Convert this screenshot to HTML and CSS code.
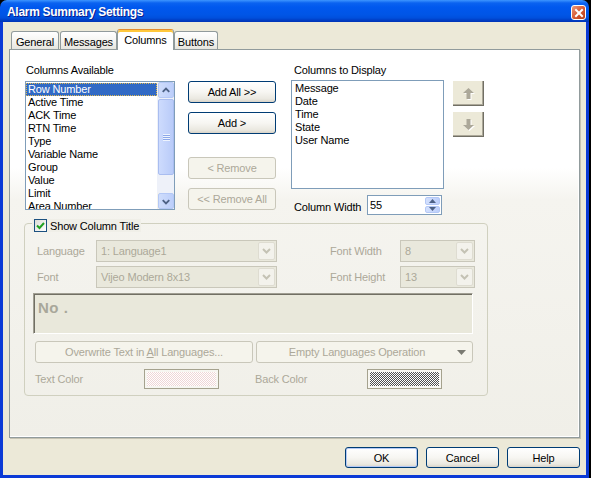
FILE: index.html
```html
<!DOCTYPE html>
<html lang="en">
<head>
    <meta charset="UTF-8">
    <title>Alarm Summary Settings</title>
    <link rel="stylesheet" href="styles.css">
</head>
<body>
    <div class="window">
        <div class="titlebar">
            <span class="title">Alarm Summary Settings</span>
            <span class="close-btn">
                <svg width="10" height="10" viewBox="0 0 10 10"><path d="M2 2 L8 8 M8 2 L2 8" stroke="#fff" stroke-width="2" stroke-linecap="square"/></svg>
            </span>
        </div>

        <div class="frame">
            <div class="tabs">
                <div class="tab tab-general">General</div>
                <div class="tab tab-messages">Messages</div>
                <div class="tab tab-columns active">Columns</div>
                <div class="tab tab-buttons">Buttons</div>
            </div>

            <div class="panel">
                <div class="columns-area">
                    <div class="col-available">
                        <div class="label">Columns Available</div>
                        <div class="listbox list-available">
                            <ul class="items">
                                <li class="selected">Row Number</li>
                                <li>Active Time</li>
                                <li>ACK Time</li>
                                <li>RTN Time</li>
                                <li>Type</li>
                                <li>Variable Name</li>
                                <li>Group</li>
                                <li>Value</li>
                                <li>Limit</li>
                                <li>Area Number</li>
                            </ul>
                            <div class="scrollbar">
                                <div class="sb-btn">
                                    <svg width="15" height="15" viewBox="0 0 15 15"><polyline points="4,9 7.5,5.5 11,9" fill="none" stroke="#4D6185" stroke-width="2"/></svg>
                                </div>
                                <div class="sb-track">
                                    <div class="sb-thumb"><span class="grip"></span></div>
                                </div>
                                <div class="sb-btn">
                                    <svg width="15" height="15" viewBox="0 0 15 15"><polyline points="4,6 7.5,9.5 11,6" fill="none" stroke="#4D6185" stroke-width="2"/></svg>
                                </div>
                            </div>
                        </div>
                    </div>

                    <div class="move-buttons">
                        <button class="btn">Add All &gt;&gt;</button>
                        <button class="btn btn-add">Add &gt;</button>
                        <button class="btn btn-remove disabled">&lt; Remove</button>
                        <button class="btn btn-remove-all disabled">&lt;&lt; Remove All</button>
                    </div>

                    <div class="col-display">
                        <div class="label label-display">Columns to Display</div>
                        <div class="listbox list-display">
                            <ul class="items">
                                <li>Message</li>
                                <li>Date</li>
                                <li>Time</li>
                                <li>State</li>
                                <li>User Name</li>
                            </ul>
                        </div>
                        <div class="width-row">
                            <span class="width-label">Column Width</span>
                            <div class="spinner">
                                <span class="spin-value">55</span>
                                <div class="spin-btns">
                                    <span class="spin-btn"><svg width="7" height="4" viewBox="0 0 7 4"><polygon points="3.5,0 7,4 0,4" fill="#4D6185"/></svg></span>
                                    <span class="spin-btn"><svg width="7" height="4" viewBox="0 0 7 4"><polygon points="0,0 7,0 3.5,4" fill="#4D6185"/></svg></span>
                                </div>
                            </div>
                        </div>
                    </div>

                    <div class="order-buttons">
                        <button class="order-btn">
                            <svg width="13" height="13" viewBox="0 0 13 13">
                                <polygon points="6.5,1 12,6 8.5,6 8.5,12 4.5,12 4.5,6 1,6" fill="#fff" transform="translate(1 1)"/>
                                <polygon points="6.5,1 12,6 8.5,6 8.5,12 4.5,12 4.5,6 1,6" fill="#ACA899"/>
                            </svg>
                        </button>
                        <button class="order-btn">
                            <svg width="13" height="13" viewBox="0 0 13 13">
                                <polygon points="4.5,1 8.5,1 8.5,7 12,7 6.5,12 1,7 4.5,7" fill="#fff" transform="translate(1 1)"/>
                                <polygon points="4.5,1 8.5,1 8.5,7 12,7 6.5,12 1,7 4.5,7" fill="#ACA899"/>
                            </svg>
                        </button>
                    </div>
                </div>

                <div class="group">
                    <div class="group-title">
                        <span class="checkbox">
                            <svg width="11" height="11" viewBox="0 0 11 11"><polyline points="2,5.5 4.5,8 9,3" fill="none" stroke="#21A121" stroke-width="2"/></svg>
                        </span>
                        <span>Show Column Title</span>
                    </div>

                    <div class="field-grid">
                        <span class="dim">Language</span>
                        <div class="combo"><span class="combo-text">1: Language1</span><span class="combo-btn"><svg width="9" height="6" viewBox="0 0 9 6"><polyline points="1,1 4.5,4.5 8,1" fill="none" stroke="#C4C2B4" stroke-width="2"/></svg></span></div>
                        <span></span>
                        <span class="dim">Font Width</span>
                        <div class="combo"><span class="combo-text">8</span><span class="combo-btn"><svg width="9" height="6" viewBox="0 0 9 6"><polyline points="1,1 4.5,4.5 8,1" fill="none" stroke="#C4C2B4" stroke-width="2"/></svg></span></div>

                        <span class="dim">Font</span>
                        <div class="combo"><span class="combo-text">Vijeo Modern 8x13</span><span class="combo-btn"><svg width="9" height="6" viewBox="0 0 9 6"><polyline points="1,1 4.5,4.5 8,1" fill="none" stroke="#C4C2B4" stroke-width="2"/></svg></span></div>
                        <span></span>
                        <span class="dim">Font Height</span>
                        <div class="combo"><span class="combo-text">13</span><span class="combo-btn"><svg width="9" height="6" viewBox="0 0 9 6"><polyline points="1,1 4.5,4.5 8,1" fill="none" stroke="#C4C2B4" stroke-width="2"/></svg></span></div>
                    </div>

                    <div class="title-box">No .</div>

                    <div class="lang-buttons">
                        <button class="btn disabled btn-overwrite">Overwrite Text in <u>A</u>ll Languages...</button>
                        <button class="btn disabled btn-empty">
                            <span class="btn-empty-text">Empty Languages Operation</span>
                            <svg width="9" height="5" viewBox="0 0 9 5"><polygon points="0,0 9,0 4.5,5" fill="#7A7A72"/></svg>
                        </button>
                    </div>

                    <div class="color-row">
                        <span class="dim color-label">Text Color</span>
                        <div class="swatch"><div class="swatch-fill fill-text"></div></div>
                        <span class="dim color-label back-label">Back Color</span>
                        <div class="swatch"><div class="swatch-fill fill-back"></div></div>
                    </div>
                </div>
            </div>

            <div class="dialog-buttons">
                <button class="btn btn-dialog default">OK</button>
                <button class="btn btn-dialog">Cancel</button>
                <button class="btn btn-dialog">Help</button>
            </div>
        </div>
    </div>
</body>
</html>
```

FILE: styles.css
```css
body {
    margin: 0;
    background: #000;
    font-family: "Liberation Sans", Arial, sans-serif;
    font-size: 11px;
    letter-spacing: -0.15px;
    color: #000;
}

.window {
    width: 589px;
    height: 478px;
    display: flex;
    flex-direction: column;
}

/* XP style caption */
.titlebar {
    height: 22px;
    box-sizing: border-box;
    display: flex;
    align-items: center;
    padding: 0 3px 0 7px;
    border-radius: 7px 7px 0 0;
    background: linear-gradient(#3D95FF 0, #0A62F0 3px, #0058EE 7px, #0055E6 15px, #004FDC 18px, #003FC6 20px, #0033B6 22px);
}

.title {
    flex: 1;
    color: #fff;
    font-weight: bold;
    font-size: 12px;
    letter-spacing: -0.3px;
    text-shadow: 1px 1px 0 #0A1E8C;
    margin-top: 1px;
}

.close-btn {
    width: 15px;
    height: 15px;
    margin-top: 3px;
    box-sizing: border-box;
    border: 1px solid #fff;
    border-radius: 3px;
    background: linear-gradient(135deg, #EC9B7E, #D5562F 55%, #B53E17);
    display: flex;
    align-items: center;
    justify-content: center;
}

.frame {
    flex: 1;
    border: 3px solid #0B3AD6;
    border-top: 0;
    background: #ECE9D8;
    padding: 7px 6px 0;
}

/* tab strip */
.tabs {
    height: 20px;
    display: flex;
    align-items: flex-end;
    padding-left: 2px;
    position: relative;
    z-index: 1;
}

.tab {
    height: 18px;
    box-sizing: border-box;
    border: 1px solid #919B9C;
    border-bottom: 0;
    border-radius: 3px 3px 0 0;
    background: linear-gradient(#FFFFFF, #F6F6F3 45%, #E6E5DE);
    display: flex;
    align-items: center;
    justify-content: center;
    padding-top: 2px;
}

.tab-general { width: 48px; margin-right: 1px; }
.tab-messages { width: 57px; }
.tab-buttons { width: 44px; }

.tab.active {
    width: 57px;
    height: 21px;
    margin-bottom: -1px;
    background: #fff;
    border-top: 1px solid #E68B2C;
    box-shadow: inset 0 2px 0 #FFC83C;
    padding: 0 0 1px;
}

.panel {
    height: 389px;
    box-sizing: border-box;
    border: 1px solid #919B9C;
    background: linear-gradient(#FFFFFF 0, #FFFFFF 118px, #F5F4EF 150px, #F0EFE8 100%);
    box-shadow: inset -1px -1px 0 #FFFFFF, 1px 1px 0 #C5C2B2;
    padding: 14px 0 0 14px;
}

.columns-area {
    display: flex;
    align-items: flex-start;
}

.label {
    height: 13px;
    line-height: 13px;
    padding-left: 1px;
}

.listbox {
    box-sizing: border-box;
    border: 1px solid #7F9DB9;
    background: #fff;
}

.items {
    list-style: none;
    margin: 0;
    padding: 1px 0 0;
    overflow: hidden;
}

.items li {
    height: 13px;
    line-height: 13px;
    padding-left: 2px;
    white-space: nowrap;
}

.items li.selected {
    background: #316AC5;
    color: #fff;
    outline: 1px dotted #E0B850;
    outline-offset: -1px;
}

.col-available {
    width: 150px;
    margin-left: 1px;
}

.list-available {
    margin-top: 4px;
    height: 129px;
    display: flex;
}

.list-available .items {
    flex: 1;
}

/* scrollbar of the left list */
.scrollbar {
    width: 17px;
    display: flex;
    flex-direction: column;
    background: #F4F3EE;
}

.sb-btn {
    height: 16px;
    margin: 0 0 0 1px;
    box-sizing: border-box;
    border: 1px solid #B4C8F6;
    border-radius: 2px;
    background: linear-gradient(90deg, #CFDDFC, #BCCEFA);
    display: flex;
    align-items: center;
    justify-content: center;
}

.sb-track {
    flex: 1;
    padding: 1px 0 18px 1px;
    background: #EEF1F9;
}

.sb-thumb {
    height: 100%;
    box-sizing: border-box;
    border: 1px solid #A9BDF0;
    border-radius: 2px;
    background: linear-gradient(90deg, #CDDBFD, #B9CBF9);
    display: flex;
    align-items: center;
    justify-content: center;
}

.grip {
    width: 7px;
    height: 7px;
    background: repeating-linear-gradient(#EEF4FE 0 1px, #8CA8EA 1px 2px);
}

.move-buttons {
    width: 88px;
    margin: 17px 0 0 13px;
    display: flex;
    flex-direction: column;
}

.btn {
    font: inherit;
    letter-spacing: inherit;
    height: 22px;
    padding: 0;
    color: #000;
    border: 1px solid #003C74;
    border-radius: 3px;
    background: linear-gradient(#FFFFFF, #F7F6F2 50%, #EAE8E0 85%, #D8D3C8);
}

.btn-add { margin-top: 9px; }
.btn-remove { margin-top: 23px; }
.btn-remove-all { margin-top: 9px; }

.btn.disabled {
    border-color: #C9C7BA;
    background: #F5F4EC;
    color: #ACA899;
}

.col-display {
    width: 153px;
    margin-left: 15px;
}

.label-display {
    padding-left: 3px;
}

.list-display {
    margin-top: 3px;
    height: 109px;
}

.list-display .items li {
    padding-left: 3px;
}

.width-row {
    display: flex;
    align-items: center;
    margin-top: 6px;
}

.width-label {
    width: 73px;
    padding: 3px 0 0 3px;
}

.spinner {
    width: 75px;
    height: 20px;
    box-sizing: border-box;
    border: 1px solid #7F9DB9;
    background: #fff;
    display: flex;
    align-items: center;
}

.spin-value {
    flex: 1;
    padding-left: 2px;
}

.spin-btns {
    width: 15px;
    height: 16px;
    margin-right: 1px;
    display: flex;
    flex-direction: column;
    gap: 1px;
}

.spin-btn {
    flex: 1;
    border: 1px solid #B4C8F6;
    border-radius: 2px;
    background: linear-gradient(90deg, #D3E0FD, #BCCEFA);
    display: flex;
    align-items: center;
    justify-content: center;
}

.order-buttons {
    margin: 16px 0 0 8px;
    display: flex;
    flex-direction: column;
    gap: 5px;
}

.order-btn {
    width: 32px;
    height: 26px;
    padding: 0;
    border: 0;
    background: #ECE9D8;
    box-shadow: inset 1px 1px 0 #FFFFFF, inset -1px -1px 0 #716F64, inset -2px -2px 0 #ACA899;
    display: flex;
    align-items: center;
    justify-content: center;
}

/* "Show Column Title" group */
.group {
    width: 464px;
    height: 173px;
    margin-top: 8px;
    box-sizing: border-box;
    border: 1px solid #D0D0BF;
    border-radius: 4px;
    padding-left: 8px;
}

.group-title {
    width: fit-content;
    height: 13px;
    margin: -5px 0 0 -1px;
    padding: 0 2px;
    display: flex;
    align-items: center;
    gap: 3px;
    background: #F0EFE8;
}

.checkbox {
    width: 13px;
    height: 13px;
    box-sizing: border-box;
    border: 1px solid #1C5180;
    background: linear-gradient(135deg, #DCDCD7, #FFFFFF);
    display: flex;
    align-items: center;
    justify-content: center;
}

.dim {
    color: #ACA899;
}

.field-grid {
    display: grid;
    grid-template-columns: 59px 181px 53px 70px 75px;
    grid-auto-rows: 22px;
    row-gap: 4px;
    align-items: center;
    margin: 8px 0 0 4px;
}

.combo {
    height: 22px;
    box-sizing: border-box;
    border: 1px solid #C9C7BA;
    background: #E9E8DC;
    display: flex;
    align-items: center;
    padding: 1px;
}

.combo-text {
    flex: 1;
    color: #ACA899;
    padding-left: 3px;
}

.combo-btn {
    width: 17px;
    height: 18px;
    box-sizing: border-box;
    border: 1px solid #DEDCD1;
    border-radius: 2px;
    background: #F3F2EC;
    display: flex;
    align-items: center;
    justify-content: center;
}

.title-box {
    width: 440px;
    height: 41px;
    margin-top: 5px;
    box-sizing: border-box;
    border: 1px solid;
    border-color: #A09E92 #FFFFFF #FFFFFF #A09E92;
    box-shadow: inset 1px 1px 0 #716F64;
    background: #E9E8DB;
    padding: 5px 0 0 4px;
    color: #A8A79A;
    font-weight: bold;
    font-size: 15px;
    letter-spacing: 0.5px;
}

.lang-buttons {
    display: flex;
    gap: 3px;
    margin: 7px 0 0 2px;
}

.btn-overwrite { width: 218px; }

.btn-empty {
    width: 217px;
    display: flex;
    align-items: center;
    padding-right: 6px;
}

.btn-empty-text {
    flex: 1;
    text-align: center;
}

.color-row {
    display: flex;
    align-items: center;
    height: 20px;
    margin: 6px 0 0 2px;
}

.color-label { width: 109px; }

.back-label {
    width: 112px;
    margin-left: 36px;
}

.swatch {
    width: 75px;
    height: 20px;
    box-sizing: border-box;
    border: 1px solid #A5A28E;
    padding: 2px;
    background: #F7F6F1;
}

/* dithered colour previews */
.swatch-fill {
    height: 100%;
    background-size: 2px 2px;
}

.fill-text {
    background-image: repeating-conic-gradient(#EFD6D6 0 25%, #FFFFFF 0 50%);
}

.fill-back {
    background-image: repeating-conic-gradient(#505050 0 25%, #FFFFFF 0 50%);
}

.dialog-buttons {
    display: flex;
    justify-content: flex-end;
    gap: 8px;
    margin-top: 9px;
}

.btn-dialog {
    width: 73px;
    height: 21px;
}

.btn-dialog.default {
    box-shadow: inset 0 0 0 1px #B4C9F5;
}
```
